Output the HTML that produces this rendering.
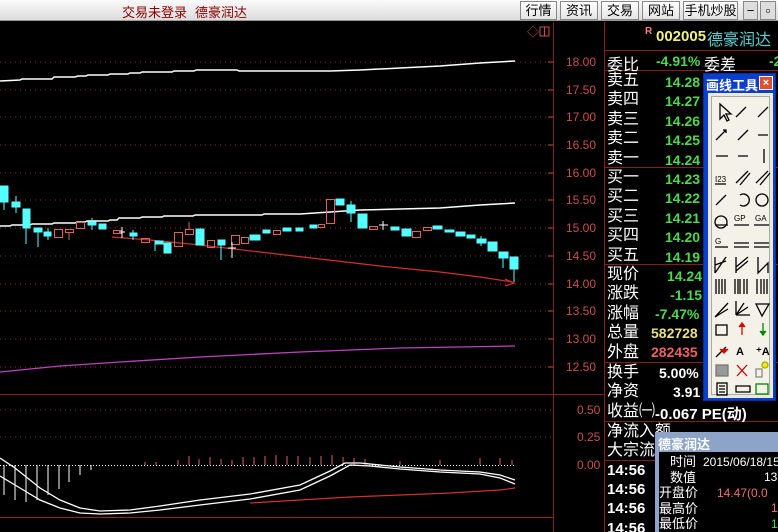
<!DOCTYPE html>
<html><head><meta charset="utf-8"><style>
*{margin:0;padding:0;box-sizing:border-box}
html,body{width:778px;height:532px;overflow:hidden}
body{background:#000;position:relative;font-family:"Liberation Sans","Noto Sans CJK SC",sans-serif}
.top{position:absolute;left:0;top:0;width:778px;height:21px;background:linear-gradient(#fafafa,#dcdcdc);border-bottom:1px solid #999}
.top .t{position:absolute;top:2px;font-size:13px;color:#8b0000}
.btn{position:absolute;top:1px;height:19px;border:1px solid #888;background:linear-gradient(#fff,#e4e4e4);font-size:13px;line-height:17px;text-align:center;color:#000}
.a{position:absolute;white-space:nowrap}
.lbl{font-size:16px;color:#fff}
.g{color:#4fd84f;font-weight:bold;font-size:14px}
.ax{position:absolute;left:566px;font-size:12px;color:#c85050}
.tb{position:absolute;left:703px;top:73px;width:73px;height:328px;background:#0a3ecc;border:1px solid #0030a0}
.tbb{position:absolute;left:4px;top:19px;width:65px;height:305px;background:#ece9d8}
.tbi{position:absolute;left:3px;top:3px;width:59px;height:299px;background:#f4f2e8;border:1px solid #aaa}
.pop{position:absolute;left:655px;top:432px;width:123px;height:100px;background:#8da4c8;overflow:hidden}
.popb{position:absolute;left:4px;top:20px;width:126px;height:90px;background:#000}
.pop .a{font-size:12px;color:#fff}
</style></head><body>
<div class="top">
<span class="t" style="left:122px">交易未登录</span>
<span class="t" style="left:195px">德豪润达</span>
<div class="btn" style="left:520px;width:37px">行情</div>
<div class="btn" style="left:560px;width:38px">资讯</div>
<div class="btn" style="left:601px;width:38px">交易</div>
<div class="btn" style="left:642px;width:38px">网站</div>
<div class="btn" style="left:683px;width:55px">手机炒股</div>
<div class="btn" style="left:743px;width:15px;background:#ddd">−</div>
<div class="btn" style="left:760px;width:16px;background:#ddd">▫</div>
</div>
<svg width="778" height="532" style="position:absolute;left:0;top:0">
<g stroke="#8b1a1a" stroke-width="1">
<line x1="553.5" y1="22" x2="553.5" y2="532"/>
<line x1="604.5" y1="22" x2="604.5" y2="532"/>
<line x1="0" y1="394.5" x2="604" y2="394.5"/>
<line x1="0" y1="517.5" x2="553" y2="517.5" stroke="#a02020"/>
</g>
<g stroke="#8b2a2a" stroke-dasharray="1 4">
<line x1="0" y1="62" x2="553" y2="62"/><line x1="0" y1="90" x2="553" y2="90"/><line x1="0" y1="117" x2="553" y2="117"/><line x1="0" y1="145" x2="553" y2="145"/><line x1="0" y1="173" x2="553" y2="173"/><line x1="0" y1="200" x2="553" y2="200"/><line x1="0" y1="228" x2="553" y2="228"/><line x1="0" y1="256" x2="553" y2="256"/><line x1="0" y1="284" x2="553" y2="284"/><line x1="0" y1="311" x2="553" y2="311"/><line x1="0" y1="339" x2="553" y2="339"/><line x1="0" y1="367" x2="553" y2="367"/><line x1="0" y1="410" x2="553" y2="410"/><line x1="0" y1="437" x2="553" y2="437"/>
</g>
<g stroke="#c85050"><line x1="548" y1="62" x2="553" y2="62"/><line x1="548" y1="90" x2="553" y2="90"/><line x1="548" y1="117" x2="553" y2="117"/><line x1="548" y1="145" x2="553" y2="145"/><line x1="548" y1="173" x2="553" y2="173"/><line x1="548" y1="200" x2="553" y2="200"/><line x1="548" y1="228" x2="553" y2="228"/><line x1="548" y1="256" x2="553" y2="256"/><line x1="548" y1="284" x2="553" y2="284"/><line x1="548" y1="311" x2="553" y2="311"/><line x1="548" y1="339" x2="553" y2="339"/><line x1="548" y1="367" x2="553" y2="367"/></g>
<text x="527" y="36" fill="#c85050" font-size="12">◇</text><rect x="540" y="27" width="9" height="9" fill="none" stroke="#c85050"/><line x1="544.5" y1="27" x2="544.5" y2="36" stroke="#c85050"/>
<polyline fill="none" stroke="#fff" stroke-width="1.5" points="0,81 20,80 22,79 52,79 54,77 75,77 78,76 86,76 88,75 108,75 110,74 128,74 130,73 140,73 142,72 172,72 174,71 194,71 196,70 237,70 239,71 300,71 330,71 360,70 400,68 440,66 480,63 515,61"/>
<polyline fill="none" stroke="#fff" stroke-width="1.5" points="0,226 10,226 12,225 30,225 32,224 52,224 54,223 75,223 77,222 85,222 87,221 108,221 110,220 117,220 119,218 140,218 142,217 162,217 164,216 193,216 195,215 262,215 264,214 300,214 330,212 360,210 400,209 440,208 480,205 515,203"/>
<polyline fill="none" stroke="#d03030" stroke-width="1.2" points="112,237 150,240 200,245 260,252 320,259 380,266 440,272 480,277 512,282"/>
<path d="M505,279 L514,283 L505,286" fill="none" stroke="#d03030" stroke-width="1.2"/>
<polyline fill="none" stroke="#c040c0" stroke-width="1.3" points="0,372 60,366 120,362 200,357 300,352 400,348 515,346"/>
<g>
<g stroke="#5ff" fill="#5ff">
<line x1="4" y1="186" x2="4" y2="210"/><rect x="0" y="186" width="8" height="16"/>
<line x1="16" y1="196" x2="16" y2="213"/><rect x="12" y="202" width="8" height="5"/>
<line x1="26" y1="209" x2="26" y2="244"/><rect x="23" y="209" width="7" height="19"/>
<line x1="38" y1="228" x2="38" y2="247"/><rect x="34" y="228" width="8" height="4"/>
<line x1="48" y1="228" x2="48" y2="240"/><rect x="44" y="232" width="7" height="4"/>
<rect x="88" y="222" width="8" height="3"/><line x1="92" y1="218" x2="92" y2="230"/>
<rect x="99" y="224" width="7" height="5"/>
<rect x="130" y="233" width="7" height="3"/><line x1="133" y1="230" x2="133" y2="240"/>
<rect x="155" y="241" width="8" height="3"/><line x1="155" y1="244" x2="155" y2="251"/>
<rect x="164" y="243" width="7" height="10"/>
<rect x="196" y="229" width="8" height="16"/>
<rect x="218" y="240" width="7" height="5"/><line x1="221" y1="240" x2="221" y2="260"/>
<rect x="250" y="235" width="10" height="5"/>
<rect x="336" y="199" width="8" height="6"/>
<rect x="347" y="205" width="8" height="8"/><line x1="351" y1="201" x2="351" y2="222"/>
<rect x="358" y="214" width="9" height="14"/>
<rect x="391" y="227" width="8" height="3"/>
<rect x="402" y="229" width="9" height="7"/>
<rect x="433" y="226" width="9" height="3"/>
<rect x="445" y="230" width="9" height="2"/>
<rect x="456" y="232" width="9" height="4"/>
<rect x="467" y="235" width="8" height="3"/>
<rect x="477" y="239" width="9" height="4"/><line x1="481" y1="236" x2="481" y2="246"/>
<rect x="488" y="242" width="9" height="9"/>
<rect x="499" y="252" width="9" height="6"/><line x1="503" y1="252" x2="503" y2="268"/>
<rect x="510" y="257" width="8" height="12"/><line x1="514" y1="257" x2="514" y2="282"/>
<rect x="263" y="230" width="7" height="3"/><rect x="283" y="228" width="8" height="3"/><rect x="296" y="228" width="7" height="3"/><rect x="310" y="225" width="7" height="3"/>
</g>
<g stroke="#e06060" fill="none">
<rect x="54.5" y="229.5" width="8" height="8"/><rect x="65.5" y="229.5" width="8" height="3"/><line x1="69" y1="232" x2="69" y2="240"/>
<rect x="76.5" y="222.5" width="8" height="6"/><rect x="113.5" y="230.5" width="8" height="3"/>
<rect x="141.5" y="238.5" width="8" height="4"/><rect x="174.5" y="232.5" width="8" height="14"/>
<rect x="185.5" y="229.5" width="8" height="5"/><line x1="189" y1="222" x2="189" y2="229"/>
<rect x="207.5" y="240.5" width="7" height="7"/><rect x="231.5" y="235.5" width="8" height="9"/>
<rect x="241.5" y="237.5" width="7" height="6"/><rect x="273.5" y="230.5" width="7" height="4"/>
<rect x="326.5" y="199.5" width="8" height="24"/><rect x="369.5" y="226.5" width="8" height="3"/>
<rect x="412.5" y="231.5" width="8" height="6"/><rect x="423.5" y="227.5" width="8" height="3"/>
<rect x="318.5" y="224.5" width="6" height="3"/>
</g>
<g stroke="#fff"><line x1="119" y1="232" x2="125" y2="232"/><line x1="122" y1="227" x2="122" y2="238"/><line x1="379" y1="225" x2="388" y2="225"/><line x1="383" y1="221" x2="383" y2="230"/><line x1="228" y1="248" x2="236" y2="248"/><line x1="232" y1="242" x2="232" y2="258"/></g>
</g>
<line x1="0" y1="465.5" x2="515" y2="465.5" stroke="#fff" stroke-dasharray="1 2"/>
<g stroke="#fff"><line x1="4" y1="465" x2="4" y2="495"/><line x1="15" y1="465" x2="15" y2="500"/><line x1="26" y1="465" x2="26" y2="502"/><line x1="37" y1="465" x2="37" y2="500"/><line x1="48" y1="465" x2="48" y2="495"/><line x1="59" y1="465" x2="59" y2="489"/><line x1="69" y1="465" x2="69" y2="482"/><line x1="80" y1="465" x2="80" y2="475"/><line x1="91" y1="465" x2="91" y2="470"/></g>
<g stroke="#e06060"><line x1="145" y1="465" x2="145" y2="462"/><line x1="156" y1="465" x2="156" y2="462"/><line x1="178" y1="465" x2="178" y2="460"/><line x1="189" y1="465" x2="189" y2="456"/><line x1="199" y1="465" x2="199" y2="459"/><line x1="210" y1="465" x2="210" y2="457"/><line x1="221" y1="465" x2="221" y2="459"/><line x1="232" y1="465" x2="232" y2="460"/><line x1="243" y1="465" x2="243" y2="457"/><line x1="254" y1="465" x2="254" y2="457"/><line x1="265" y1="465" x2="265" y2="456"/><line x1="276" y1="465" x2="276" y2="455"/><line x1="287" y1="465" x2="287" y2="456"/><line x1="298" y1="465" x2="298" y2="456"/><line x1="310" y1="465" x2="310" y2="457"/><line x1="321" y1="465" x2="321" y2="456"/><line x1="332" y1="465" x2="332" y2="455"/><line x1="343" y1="465" x2="343" y2="457"/><line x1="354" y1="465" x2="354" y2="458"/><line x1="365" y1="465" x2="365" y2="459"/><line x1="400" y1="465" x2="400" y2="461"/><line x1="440" y1="465" x2="440" y2="460"/><line x1="480" y1="465" x2="480" y2="458"/><line x1="500" y1="465" x2="500" y2="458"/><line x1="512" y1="465" x2="512" y2="460"/></g>
<polyline fill="none" stroke="#fff" stroke-width="1.3" points="0,458 15,468 40,488 60,500 80,508 100,511 130,510 160,506 200,500 250,494 300,485 330,471 345,463 360,463 400,467 440,470 480,472 500,475 515,480"/>
<polyline fill="none" stroke="#fff" stroke-width="1.3" points="0,476 20,488 40,500 60,508 80,513 100,514 130,513 160,510 200,505 250,499 300,490 330,476 350,465 370,466 400,469 440,472 480,474 500,478 515,484"/>
<polyline fill="none" stroke="#d03030" stroke-width="1.2" points="250,503 300,500 350,497 400,495 450,493 500,490 515,488"/>
<g stroke="#8b1a1a"><line x1="604" y1="50.5" x2="778" y2="50.5"/><line x1="604" y1="70.5" x2="778" y2="70.5"/><line x1="604" y1="167.5" x2="778" y2="167.5"/><line x1="604" y1="264.5" x2="778" y2="264.5"/><line x1="604" y1="362.5" x2="778" y2="362.5"/><line x1="604" y1="421.5" x2="778" y2="421.5"/><line x1="604" y1="460.5" x2="778" y2="460.5"/></g>
</svg>
<div class="ax" style="top:55px">18.00</div><div class="ax" style="top:83px">17.50</div><div class="ax" style="top:110px">17.00</div><div class="ax" style="top:138px">16.50</div><div class="ax" style="top:166px">16.00</div><div class="ax" style="top:193px">15.50</div><div class="ax" style="top:221px">15.00</div><div class="ax" style="top:249px">14.50</div><div class="ax" style="top:277px">14.00</div><div class="ax" style="top:304px">13.50</div><div class="ax" style="top:332px">13.00</div><div class="ax" style="top:360px">12.50</div>
<div class="ax" style="top:403px;left:577px">0.50</div><div class="ax" style="top:430px;left:577px">0.25</div><div class="ax" style="top:458px;left:577px">0.00</div>
<div class="a" style="left:645px;top:26px;font-size:10px;color:#f08080;font-weight:bold">R</div>
<div class="a" style="left:656px;top:28px;font-size:15px;color:#f0f080;font-weight:bold">002005</div>
<div class="a" style="left:707px;top:26px;font-size:16px;color:#5fd0d0">德豪润达</div>
<div class="a lbl" style="left:607px;top:51px">委比</div><div class="a g" style="left:656px;top:53px">-4.91%</div><div class="a lbl" style="left:704px;top:51px">委差</div><div class="a g" style="left:769px;top:53px">-2</div>
<div class="a lbl" style="left:607px;top:71px;line-height:19.4px">卖五<br>卖四<br>卖三<br>卖二<br>卖一</div>
<div class="a g" style="left:665px;top:73px;line-height:19.4px">14.28<br>14.27<br>14.26<br>14.25<br>14.24</div>
<div class="a lbl" style="left:607px;top:168px;line-height:19.4px">买一<br>买二<br>买三<br>买四<br>买五</div>
<div class="a g" style="left:665px;top:170px;line-height:19.4px">14.23<br>14.22<br>14.21<br>14.20<br>14.19</div>
<div class="a lbl" style="left:607px;top:265px;line-height:19.4px">现价<br>涨跌<br>涨幅<br>总量<br>外盘</div>
<div class="a g" style="left:660px;top:267px;line-height:19.4px;text-align:right;width:42px">14.24<br>-1.15</div>
<div class="a g" style="left:655px;top:306px">-7.47%</div>
<div class="a g" style="left:651px;top:325px;color:#e8e080">582728</div>
<div class="a g" style="left:651px;top:344px;color:#f06060">282435</div>
<div class="a lbl" style="left:607px;top:363px;line-height:19.4px">换手<br>净资<br>收益㈠</div>
<div class="a g" style="left:659px;top:365px;color:#fff">5.00%</div>
<div class="a g" style="left:673px;top:384px;color:#fff">3.91</div>
<div class="a g" style="left:655px;top:403px;color:#fff;font-size:15px">-0.067 PE(动)</div>
<div class="a lbl" style="left:607px;top:422px;line-height:19.4px">净流入额<br>大宗流</div>
<div class="a g" style="left:607px;top:461px;color:#fff;font-size:15px;line-height:19.2px">14:56<br>14:56<br>14:56<br>14:56</div>
<div class="tb"><div class="a" style="left:2px;top:1px;font-size:13px;color:#fff;font-weight:bold">画线工具</div>
<div class="a" style="left:55px;top:2px;width:14px;height:14px;background:#e05030;border:1px solid #fff;color:#fff;font-size:11px;line-height:12px;text-align:center;font-weight:bold">×</div>
<div class="tbb"><div class="tbi">
<svg width="59" height="299" stroke="#000" fill="none" stroke-width="1.3">
<path d="M8,7 L8,22 L12,18 L15,24 L17,23 L14,17 L19,17 Z"/>
<path d="M24,20 L34,10 M46,20 L56,10"/>
<path d="M4,43 L14,33 M11,33 L14,33 L14,36 M26,43 L36,33 M46,38 L56,38"/>
<path d="M4,59 L16,59 M26,59 L36,59 M52,52 L52,66"/>
<text x="3" y="85" font-size="8" fill="#000" stroke="none">I23</text><path d="M3,87 L14,87 M24,86 L36,74 M28,88 L38,76 M44,86 L56,74 M48,88 L58,76"/>
<path d="M4,108 L14,98 M28,98 A6,6 0 1 1 28,108"/><circle cx="50" cy="103" r="6"/>
<circle cx="9" cy="125" r="6"/><text x="22" y="124" font-size="8" fill="#000" stroke="none">GP</text><text x="43" y="124" font-size="8" fill="#000" stroke="none">GA</text>
<path d="M3,128 L16,128 M22,128 L37,128 M42,128 L57,128"/>
<text x="3" y="147" font-size="8" fill="#000" stroke="none">G</text><path d="M3,150 L16,150 M22,150 L37,150 M42,150 L57,150 M22,146 L37,146 M42,146 L57,146"/>
<path d="M3,160 L3,176 M3,176 L14,160 M3,168 L14,164 M24,160 L24,176 M24,170 L36,160 M24,174 L36,164 M46,160 L46,176 L56,166 L56,176"/>
<path d="M4,182 L4,197 M7,182 L7,197 M10,182 L10,197 M13,182 L13,197 M23,182 L23,197 M26,182 L26,197 M28,182 L28,197 M32,182 L32,197 M35,182 L35,197 M45,182 L45,197 M49,182 L49,197 M52,182 L52,197 M55,182 L55,197"/>
<path d="M3,220 L16,206 M3,220 L16,212 M24,218 L24,204 M24,218 L38,218 M24,218 L32,206 M24,218 L36,210 M44,207 L57,207 L50,219 Z"/>
<rect x="4" y="228" width="11" height="10"/><path d="M30,226 L30,238" stroke="#d00"/><path d="M27,230 L30,226 L33,230" fill="#d00" stroke="#d00"/><path d="M51,226 L51,238" stroke="#080"/><path d="M48,234 L51,238 L54,234" fill="#080" stroke="#080"/>
<path d="M4,260 L14,250" stroke="#000"/><path d="M8,252 L12,256 L16,252" fill="#d00" stroke="#d00"/><text x="24" y="258" font-size="11" font-weight="bold" fill="#000" stroke="none">A</text><text x="44" y="258" font-size="11" font-weight="bold" fill="#000" stroke="none">⁺A</text>
<rect x="4" y="268" width="12" height="11" fill="#999" stroke="#777"/><path d="M25,268 L35,279 M35,268 L25,279" stroke="#c00"/><circle cx="53" cy="268" r="3" fill="#ee0" stroke="#aa0"/><rect x="44" y="272" width="6" height="8" stroke="#888"/>
<rect x="5" y="286" width="10" height="12"/><path d="M7,289 L13,289 M7,292 L13,292 M7,295 L13,295 M24,289 L38,289 L38,295 L24,295 Z"/><rect x="44" y="287" width="12" height="10" stroke="#080"/>
</svg></div></div></div>
<div class="pop"><div class="a" style="left:3px;top:2px;font-size:13px;color:#fff;font-weight:bold">德豪润达</div>
<div class="popb">
<div class="a" style="left:11px;top:2px;line-height:15.5px;font-size:13px">时间<br>数值</div>
<div class="a" style="left:0px;top:33px;line-height:15.5px;font-size:13px">开盘价<br>最高价<br>最低价<br>收盘价</div>
<div class="a" style="left:44px;top:3px">2015/06/18/15</div>
<div class="a" style="left:105px;top:18px">13.</div>
<div class="a" style="left:58px;top:34px;color:#f07070">14.47(0.0</div>
<div class="a" style="left:112px;top:49px;color:#f07070">1</div>
<div class="a" style="left:112px;top:65px;color:#4fd84f">1</div>
</div></div>
</body></html>
